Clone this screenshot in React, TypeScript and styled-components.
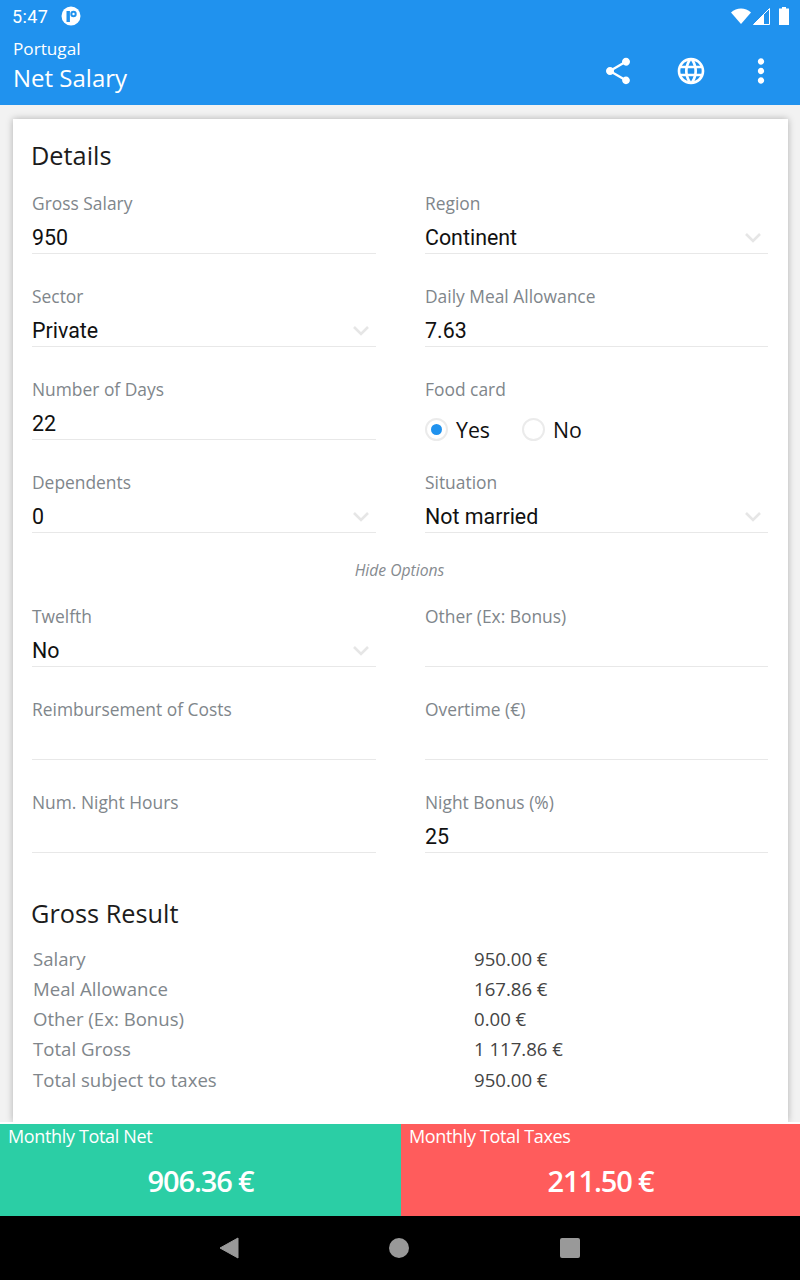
import { FC, Fragment } from "react";
import styled, { createGlobalStyle } from "styled-components";
import { MdLanguage, MdMoreVert, MdShare } from "react-icons/md";

const GlobalStyle = createGlobalStyle`
  html, body {
    margin: 0;
    padding: 0;
    background: #f2f2f2;
  }
`;

const Screen = styled.div`
  display: flex;
  flex-direction: column;
  width: 800px;
  height: 1280px;
  overflow: hidden;
  font-family: "Open Sans", sans-serif;
`;

const Header = styled.header`
  flex: 0 0 105px;
  background: #2092ee;
  color: #fff;
`;

const StatusBar = styled.div`
  display: flex;
  align-items: center;
  height: 32px;
  padding: 0 11px 0 12px;
  font-family: Roboto, sans-serif;
  font-size: 18px;
  letter-spacing: 0.4px;
`;

const StatusTime = styled.span`
  margin-right: 13px;
`;

const StatusIcons = styled.div`
  display: flex;
  align-items: center;
  gap: 2px;
  margin-left: auto;
`;

const Battery = styled.svg`
  margin-left: 7px;
`;

const AppBar = styled.div`
  display: flex;
  align-items: center;
  height: 73px;
  padding-left: 13px;
`;

const TitleBlock = styled.div`
  flex: 1;
  margin-top: -5px;
`;

const Country = styled.div`
  font-size: 17.2px;
  line-height: 24px;
`;

const Title = styled.div`
  font-size: 24px;
  line-height: 34px;
`;

const ActionIcon = styled.div`
  display: flex;
  justify-content: center;
  width: 73px;
  margin-top: 4px;
  font-size: 32px;
  line-height: 0;

  &:last-child {
    width: 67px;
    margin-right: 6px;
    font-size: 38px;
  }
`;

const Main = styled.main`
  flex: 1;
  min-height: 0;
  padding: 14px 12px 0 13px;
`;

const Card = styled.div`
  height: 100%;
  padding: 16px 20px 0 18px;
  box-sizing: border-box;
  background: #fff;
  box-shadow: 0 0 7px rgba(0, 0, 0, 0.28);
`;

const SectionTitle = styled.h2`
  margin: 0;
  font-size: 25.3px;
  font-weight: 400;
  line-height: 40px;
  color: #1c1c1c;
`;

const FormGrid = styled.div`
  display: grid;
  grid-template-columns: 344px 343px;
  column-gap: 49px;
  grid-auto-rows: 93px;
  margin-left: 1px;
`;

const TopGrid = styled(FormGrid)`
  margin-top: 14px;
`;

const Field = styled.div``;

const FieldLabel = styled.div`
  height: 30px;
  padding-top: 1px;
  box-sizing: border-box;
  font-size: 17.4px;
  line-height: 26px;
  color: #80868b;
`;

const FieldValue = styled.div`
  display: flex;
  align-items: center;
  justify-content: space-between;
  height: 35px;
  padding-top: 3px;
  box-sizing: border-box;
  border-bottom: 1px solid #e8e8e8;
  font-family: Roboto, sans-serif;
  font-size: 21.4px;
  color: #111;
`;

const Radios = styled.div`
  display: flex;
  align-items: center;
  height: 34px;
  padding-top: 14px;
  box-sizing: border-box;
  font-size: 21.3px;
  color: #111;
`;

const RadioOption = styled.div`
  display: flex;
  align-items: center;
  gap: 8px;
  margin-right: 32px;
`;

const RadioMark = styled.span<{ $checked?: boolean }>`
  display: flex;
  align-items: center;
  justify-content: center;
  width: 23px;
  height: 23px;
  box-sizing: border-box;
  border: 2px solid #ebebeb;
  border-radius: 50%;

  &::after {
    content: "";
    width: 11px;
    height: 11px;
    border-radius: 50%;
    background: ${({ $checked }) => ($checked ? "#2092ee" : "transparent")};
  }
`;

const OptionsToggle = styled.div`
  height: 43px;
  margin-top: -2px;
  font-size: 15.7px;
  font-style: italic;
  line-height: 22px;
  text-align: center;
  color: #868b90;
`;

const ResultTitle = styled(SectionTitle)`
  margin-top: 12px;
`;

const ResultTable = styled.div`
  display: grid;
  grid-template-columns: 441px 1fr;
  grid-auto-rows: 30.25px;
  margin: 10px 0 0 2px;
  align-items: center;
`;

const ResultLabel = styled.div`
  font-size: 18.6px;
  color: #80868b;
`;

const ResultValue = styled.div`
  font-size: 18.6px;
  color: #444;
`;

const Totals = styled.div`
  display: flex;
  flex: 0 0 94px;
  box-sizing: border-box;
  border-top: 2px solid #fff;
`;

const TotalBox = styled.div<{ $color: string; $width: number }>`
  width: ${({ $width }) => $width}px;
  padding: 0 8px;
  box-sizing: border-box;
  background: ${({ $color }) => $color};
  color: #fff;
`;

const TotalLabel = styled.div`
  font-size: 18px;
  letter-spacing: -0.35px;
  line-height: 24px;
`;

const TotalAmount = styled.div`
  margin-top: 14px;
  font-size: 29px;
  font-weight: 600;
  line-height: 38px;
  letter-spacing: -1.15px;
  text-align: center;
`;

const NavBar = styled.nav`
  display: flex;
  flex: 0 0 64px;
  align-items: center;
  gap: 150px;
  padding-left: 219px;
  background: #000;

  svg:last-child {
    margin-left: 1px;
  }
`;

const ChevronIcon = styled.svg`
  margin-right: 6px;
`;

const Chevron: FC = () => (
  <ChevronIcon width="18" height="18" viewBox="0 0 18 18">
    <path d="M2 5l7 7 7-7" fill="none" stroke="#e6e6e6" strokeWidth="2.6" />
  </ChevronIcon>
);

type FieldData = {
  label: string;
  value?: string;
  select?: boolean;
};

const topFields: FieldData[] = [
  { label: "Gross Salary", value: "950" },
  { label: "Region", value: "Continent", select: true },
  { label: "Sector", value: "Private", select: true },
  { label: "Daily Meal Allowance", value: "7.63" },
  { label: "Number of Days", value: "22" },
];

const optionFields: FieldData[] = [
  { label: "Twelfth", value: "No", select: true },
  { label: "Other (Ex: Bonus)" },
  { label: "Reimbursement of Costs" },
  { label: "Overtime (€)" },
  { label: "Num. Night Hours" },
  { label: "Night Bonus (%)", value: "25" },
];

const results = [
  ["Salary", "950.00 €"],
  ["Meal Allowance", "167.86 €"],
  ["Other (Ex: Bonus)", "0.00 €"],
  ["Total Gross", "1 117.86 €"],
  ["Total subject to taxes", "950.00 €"],
];

const FormField: FC<FieldData> = ({ label, value, select }) => (
  <Field>
    <FieldLabel>{label}</FieldLabel>
    <FieldValue>
      {value}
      {select && <Chevron />}
    </FieldValue>
  </Field>
);

export default function App() {
  return (
    <Screen>
      <GlobalStyle />
      <Header>
        <StatusBar>
          <StatusTime>5:47</StatusTime>
          <svg width="20" height="20" viewBox="0 0 20 20">
            <circle cx="10" cy="10" r="9.5" fill="#fff" />
            <rect x="5.500" y="5" width="3.4" height="11" fill="#2092ee" />
            <circle cx="12.5" cy="8" r="3.2" fill="#2092ee" />
            <circle cx="12.5" cy="8" r="1.2" fill="#fff" />
          </svg>
          <StatusIcons>
            <svg width="20" height="16" viewBox="0 0 20 16">
              <path d="M0 4.5C5.5-.7 14.500-.7 20 4.5L10 16z" fill="#fff" />
            </svg>
            <svg width="17" height="17" viewBox="0 0 17 17">
              <path d="M16.5.5v16H.5z" fill="none" stroke="#fff" strokeWidth="1" />
              <path d="M11 6v10.500H.5z" fill="#fff" />
            </svg>
            <Battery width="10" height="18" viewBox="0 0 10 18">
              <path d="M3 0h4v1.500h3V18H0V1.500h3z" fill="#fff" />
            </Battery>
          </StatusIcons>
        </StatusBar>
        <AppBar>
          <TitleBlock>
            <Country>Portugal</Country>
            <Title>Net Salary</Title>
          </TitleBlock>
          <ActionIcon>
            <MdShare />
          </ActionIcon>
          <ActionIcon>
            <MdLanguage />
          </ActionIcon>
          <ActionIcon>
            <MdMoreVert />
          </ActionIcon>
        </AppBar>
      </Header>

      <Main>
        <Card>
          <SectionTitle>Details</SectionTitle>
          <TopGrid>
            {topFields.map((field) => (
              <FormField key={field.label} {...field} />
            ))}
            <Field>
              <FieldLabel>Food card</FieldLabel>
              <Radios>
                <RadioOption>
                  <RadioMark $checked />
                  Yes
                </RadioOption>
                <RadioOption>
                  <RadioMark />
                  No
                </RadioOption>
              </Radios>
            </Field>
            <FormField label="Dependents" value="0" select />
            <FormField label="Situation" value="Not married" select />
          </TopGrid>
          <OptionsToggle>Hide Options</OptionsToggle>
          <FormGrid>
            {optionFields.map((field) => (
              <FormField key={field.label} {...field} />
            ))}
          </FormGrid>
          <ResultTitle>Gross Result</ResultTitle>
          <ResultTable>
            {results.map(([label, value]) => (
              <Fragment key={label}>
                <ResultLabel>{label}</ResultLabel>
                <ResultValue>{value}</ResultValue>
              </Fragment>
            ))}
          </ResultTable>
        </Card>
      </Main>

      <Totals>
        <TotalBox $color="#2bcea5" $width={401}>
          <TotalLabel>Monthly Total Net</TotalLabel>
          <TotalAmount>906.36 €</TotalAmount>
        </TotalBox>
        <TotalBox $color="#ff5c5c" $width={399}>
          <TotalLabel>Monthly Total Taxes</TotalLabel>
          <TotalAmount>211.50 €</TotalAmount>
        </TotalBox>
      </Totals>

      <NavBar>
        <svg width="20" height="22" viewBox="0 0 20 22">
          <path d="M19 1v20L1 11z" fill="#999" stroke="#999" strokeLinejoin="round" />
        </svg>
        <svg width="20" height="20" viewBox="0 0 20 20">
          <circle cx="10" cy="10" r="10" fill="#999" />
        </svg>
        <svg width="20" height="20" viewBox="0 0 20 20">
          <rect width="20" height="20" rx="2" fill="#999" />
        </svg>
      </NavBar>
    </Screen>
  );
}
